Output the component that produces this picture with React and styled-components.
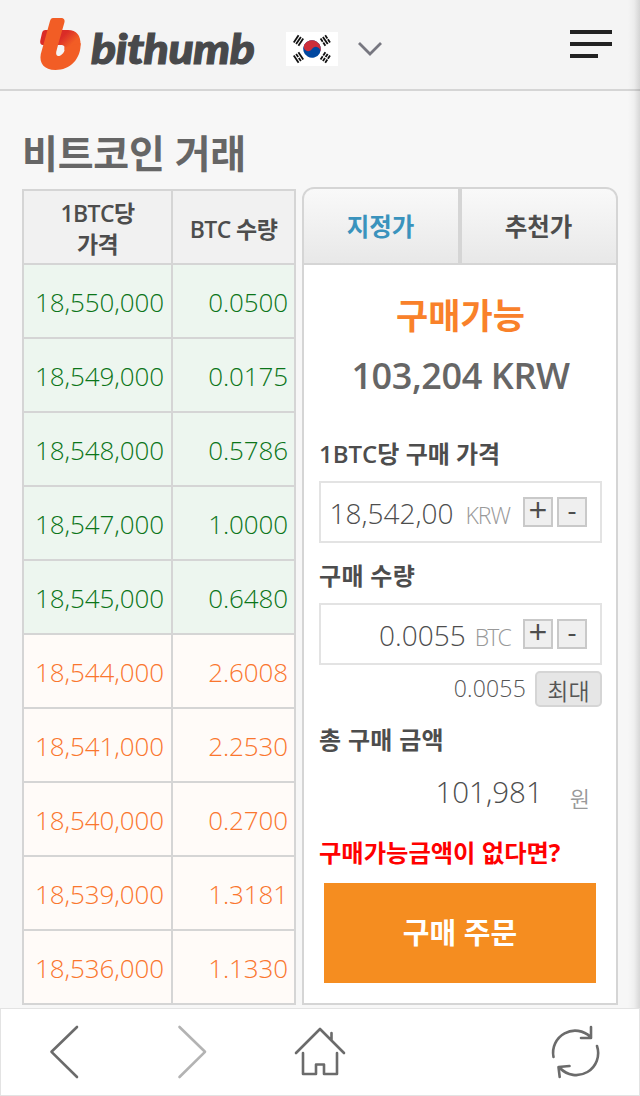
import React, { useState } from 'react'
import styled, { createGlobalStyle, css } from 'styled-components'

const GlobalStyle = createGlobalStyle`
  * {
    box-sizing: border-box;
  }
  body {
    margin: 0;
    background: #f7f7f7;
    font-family: 'Open Sans', 'Noto Sans CJK KR', sans-serif;
    color: #4d4d4d;
  }
  button {
    font-family: inherit;
    color: inherit;
    cursor: pointer;
  }
`

const Page = styled.div`
  position: relative;
  display: flex;
  flex-direction: column;
  width: 640px;
  height: 1096px;
  overflow: hidden;
  background: #f7f7f7;
`

const EdgeShade = styled.div`
  position: absolute;
  top: 0;
  right: 0;
  width: 12px;
  height: 1008px;
  background: linear-gradient(to right, rgba(0, 0, 0, 0), rgba(0, 0, 0, 0.03) 50%, rgba(0, 0, 0, 0.13));
`

const Header = styled.header`
  display: flex;
  align-items: flex-start;
  flex: 0 0 91px;
  padding: 0 28px 0 38px;
  background: #f4f4f4;
  border-bottom: 2px solid #d5d5d5;
`

const LogoMark = styled.svg`
  width: 44px;
  height: 54px;
  margin-top: 17px;
`

const Wordmark = styled.span`
  width: 168px;
  margin: 22px 0 0 9px;
  font-family: Lato, sans-serif;
  font-size: 41px;
  font-weight: 900;
  font-style: italic;
  line-height: 54px;
  letter-spacing: -0.4px;
  color: #48494b;
  transform: scaleX(1.13);
  transform-origin: left;
  -webkit-text-stroke: 1.1px #48494b;
`

const Flag = styled.svg`
  width: 52px;
  height: 34px;
  margin: 32px 0 0 27px;
`

const Caret = styled.svg`
  width: 26px;
  height: 16px;
  margin: 41px 0 0 19px;
`

const MenuButton = styled.button`
  display: flex;
  flex-direction: column;
  gap: 8px;
  margin: 30px 0 0 auto;
  padding: 0;
  border: none;
  background: none;
`

const Bar = styled.span`
  width: ${({ $short }) => ($short ? '28px' : '42px')};
  height: 4px;
  background: #222;
`

const Main = styled.main`
  flex: 0 0 917px;
  padding: 32px 22px 0;
`

const Title = styled.h1`
  height: 64px;
  margin: 0;
  font-size: 39px;
  font-weight: 700;
  line-height: 59px;
  letter-spacing: -0.2px;
  color: #666;
`

const Columns = styled.div`
  display: flex;
  align-items: flex-end;
  gap: 6px;
  height: 818px;
`

const OrderBook = styled.div`
  width: 274px;
  border: 2px solid #d5d5d5;
  border-bottom: none;
`

const BookRow = styled.div`
  display: grid;
  grid-template-columns: 147px 123px;
  height: 74px;
  border-bottom: 2px solid #d5d5d5;
  font-size: 26px;
  font-weight: 340;
  ${({ $side }) =>
    $side === 'ask'
      ? css`
          background: #edf6ef;
          color: #0b7519;
        `
      : css`
          background: #fffbf8;
          color: #fa762e;
        `}
`

const BookHead = styled(BookRow)`
  background: #f1f1f1;
  color: #4d4d4d;
  font-size: 23px;
  font-weight: 650;
  line-height: 31px;
  text-align: center;
`

const HeadCell = styled.div`
  display: flex;
  align-items: center;
  justify-content: center;
  padding-top: 4px;
  letter-spacing: -0.6px;
  & + & {
    border-left: 2px solid #d5d5d5;
  }
`

const Cell = styled.div`
  display: flex;
  align-items: center;
  justify-content: flex-end;
  padding: 1px 7px 0 0;
  letter-spacing: -0.1px;
  & + & {
    padding-right: 6px;
    border-left: 2px solid #d5d5d5;
  }
`

const Panel = styled.section`
  width: 316px;
  height: 818px;
  border: 2px solid #d5d5d5;
  border-radius: 12px 12px 0 0;
  background: #fff;
  overflow: hidden;
`

const Tabs = styled.div`
  display: grid;
  grid-template-columns: 154px 1fr;
  gap: 4px;
  height: 76px;
  border-bottom: 2px solid #d5d5d5;
  background: #d5d5d5;
`

const Tab = styled.button`
  padding: 0 1px 2px 0;
  border: none;
  background: linear-gradient(#f9f9f9, #e8e8e8);
  font-size: 24.5px;
  font-weight: 700;
  color: ${({ $active }) => ($active ? '#3a93bd' : '#4d4d4d')};
`

const Form = styled.div`
  display: flex;
  flex-direction: column;
  padding: 21px 14px 0 15px;
`

const Available = styled.div`
  height: 60px;
  font-size: 35px;
  font-weight: 700;
  line-height: 59px;
  text-align: center;
  color: #f9812a;
`

const Balance = styled.div`
  height: 60px;
  margin-bottom: 21px;
  font-size: 36px;
  font-weight: 650;
  line-height: 60px;
  letter-spacing: -0.4px;
  text-align: center;
  color: #666;
`

const Label = styled.div`
  height: ${({ $height }) => $height}px;
  padding-top: ${({ $shift }) => $shift || 0}px;
  font-size: 24px;
  font-weight: 650;
  line-height: 53px;
  letter-spacing: ${({ $spacing }) => $spacing || '0'};
`

const Field = styled.div`
  display: flex;
  align-items: center;
  height: 62px;
  padding-right: 13px;
  border: 2px solid #e3e3e3;
`

const FieldText = styled.div`
  display: flex;
  flex: 1;
  align-items: baseline;
  justify-content: flex-end;
  padding: 2px 13px 0 0;
`

const Value = styled.span`
  font-size: 28px;
  font-weight: 340;
`

const Unit = styled.span`
  margin-left: ${({ $gap }) => $gap}px;
  font-size: 23px;
  font-weight: 300;
  letter-spacing: ${({ $spacing }) => $spacing}px;
  color: #999;
`

const Step = styled.button`
  width: 30px;
  height: 30px;
  padding: 0;
  border: 2px solid #c9c9c9;
  background: #efefef;
  font-size: 30px;
  font-weight: 400;
  line-height: 19px;
  & + & {
    margin-left: 4px;
  }
`

const Sign = styled.span`
  display: block;
  height: 26px;
  font-size: ${({ $plus }) => ($plus ? '33px' : '28px')};
  line-height: ${({ $plus }) => ($plus ? '22px' : '21px')};
`

const MaxRow = styled.div`
  display: flex;
  justify-content: flex-end;
  gap: 9px;
  margin-top: 6px;
  height: 36px;
  font-size: 23px;
  font-weight: 340;
  line-height: 35px;
  letter-spacing: 0.2px;
  color: #555;
`

const MaxButton = styled.button`
  width: 67px;
  padding: 4px 0 0;
  border: 2px solid #d5d5d5;
  border-radius: 5px;
  background: #e6e6e6;
  font-size: 23px;
  font-weight: 350;
  line-height: 28px;
`

const Total = styled.div`
  display: flex;
  justify-content: flex-end;
  gap: 27px;
  height: 54px;
  padding-right: 12px;
  font-size: 29.5px;
  font-weight: 340;
  line-height: 54px;
`

const Won = styled.span`
  padding-top: 6px;
  font-size: 22px;
  color: #999;
`

const Help = styled.a`
  height: 64px;
  padding-top: 7px;
  font-size: 24.3px;
  font-weight: 700;
  line-height: 54px;
  color: #f00;
`

const Submit = styled.button`
  width: 272px;
  height: 100px;
  margin-left: 5px;
  padding-bottom: 5px;
  border: none;
  background: #f58d20;
  color: #fff;
  font-size: 29px;
  font-weight: 700;
`

const BottomNav = styled.nav`
  display: flex;
  align-items: center;
  flex: 0 0 88px;
  padding-bottom: 1px;
  border: 1px solid #e3e3e3;
  background: #fff;
`

const NavIcon = styled.svg`
  width: 56px;
  height: 60px;
  margin-left: ${({ $gap }) => $gap}px;
  fill: none;
  stroke: ${({ $muted }) => ($muted ? '#b3b3b3' : '#6b6b6b')};
  stroke-width: 2.6;
  stroke-linecap: round;
  stroke-linejoin: round;
`

const orders = [
  ['18,550,000', '0.0500', 'ask'],
  ['18,549,000', '0.0175', 'ask'],
  ['18,548,000', '0.5786', 'ask'],
  ['18,547,000', '1.0000', 'ask'],
  ['18,545,000', '0.6480', 'ask'],
  ['18,544,000', '2.6008', 'bid'],
  ['18,541,000', '2.2530', 'bid'],
  ['18,540,000', '0.2700', 'bid'],
  ['18,539,000', '1.3181', 'bid'],
  ['18,536,000', '1.1330', 'bid'],
]

/* three bars of a trigram; a broken bar is drawn as two halves */
const Trigram = ({ x, y, angle, broken }) => (
  <g transform={`translate(${x} ${y}) rotate(${angle})`} stroke="#111" strokeWidth="1.8">
    {[-2.8, 0, 2.8].map((dy, i) => (
      <path
        key={dy}
        d={broken[i] ? `M-4.3 ${dy}H-.5M.5 ${dy}H4.3` : `M-4.3 ${dy}H4.3`}
      />
    ))}
  </g>
)

const KoreanFlag = () => (
  <Flag viewBox="0 0 52 34">
    <rect width="52" height="34" fill="#fff" />
    <g transform="rotate(30 26 17)">
      <circle cx="26" cy="17" r="8.8" fill="#0047a0" />
      <path
        d="M17.2 17a8.8 8.8 0 0 1 17.6 0a4.4 4.4 0 0 0-8.8 0a4.4 4.4 0 0 1-8.8 0"
        fill="#cd2e3a"
      />
    </g>
    <Trigram x={12.5} y={8.5} angle={-56} broken={[0, 0, 0]} />
    <Trigram x={39.3} y={8.5} angle={56} broken={[1, 0, 1]} />
    <Trigram x={12.5} y={25.5} angle={56} broken={[0, 1, 0]} />
    <Trigram x={39.3} y={25.5} angle={-56} broken={[1, 1, 1]} />
  </Flag>
)

const Logo = () => (
  <LogoMark viewBox="0 0 44 54">
    <defs>
      <linearGradient id="fold" gradientUnits="userSpaceOnUse" x1="24" y1="18" x2="34" y2="28">
        <stop offset="0.1" stopColor="#da2c27" />
        <stop offset="0.95" stopColor="#f25d25" />
      </linearGradient>
    </defs>
    <path
      d="M7.500 13H30C38.500 13 43 18.500 42.500 28L38 36L26.500 33V30C26 28 24 27.700 20.500 28H4.500C2.500 27.700 1.800 25.500 2.300 23.500L4 16C4.500 14 5.500 13 7.500 13Z"
      fill="url(#fold)"
    />
    <path
      d="M15 1H23C25.700 1 27.200 3 26.400 5.500L20 28L18.200 35C17.700 38.500 19.500 39.800 22 38.700C25.500 37 27.300 33.500 26.500 30.500L42.600 26C43.200 42 32 53 17.500 53C6 53 1 46 2.800 37L12 4C12.600 2 13.500 1 15 1Z"
      fill="#f25d25"
    />
  </LogoMark>
)

const Steppers = () => (
  <>
    <Step>
      <Sign $plus>+</Sign>
    </Step>
    <Step>
      <Sign>-</Sign>
    </Step>
  </>
)

const App = () => {
  const [tab, setTab] = useState(0)

  return (
    <>
      <GlobalStyle />
      <Page>
        <Header>
          <Logo />
          <Wordmark>bithumb</Wordmark>
          <KoreanFlag />
          <Caret viewBox="0 0 26 16" fill="none" stroke="#777780" strokeWidth="2.8">
            <path d="M2 2L13 13L24 2" />
          </Caret>
          <MenuButton aria-label="menu">
            <Bar />
            <Bar />
            <Bar $short />
          </MenuButton>
        </Header>

        <Main>
          <Title>비트코인 거래</Title>
          <Columns>
            <OrderBook>
              <BookHead>
                <HeadCell>
                  1BTC당
                  <br />
                  가격
                </HeadCell>
                <HeadCell>BTC 수량</HeadCell>
              </BookHead>
              {orders.map(([price, amount, side]) => (
                <BookRow key={price} $side={side}>
                  <Cell>{price}</Cell>
                  <Cell>{amount}</Cell>
                </BookRow>
              ))}
            </OrderBook>

            <Panel>
              <Tabs>
                {['지정가', '추천가'].map((name, i) => (
                  <Tab key={name} $active={tab === i} onClick={() => setTab(i)}>
                    {name}
                  </Tab>
                ))}
              </Tabs>
              <Form>
                <Available>구매가능</Available>
                <Balance>103,204 KRW</Balance>

                <Label $height={54}>1BTC당 구매 가격</Label>
                <Field>
                  <FieldText>
                    <Value>18,542,00</Value>
                    <Unit $gap={12} $spacing={-1}>KRW</Unit>
                  </FieldText>
                  <Steppers />
                </Field>

                <Label $height={60} $shift={6} $spacing="0.3px">구매 수량</Label>
                <Field>
                  <FieldText>
                    <Value>0.0055</Value>
                    <Unit $gap={9} $spacing={-1.8}>BTC</Unit>
                  </FieldText>
                  <Steppers />
                </Field>
                <MaxRow>
                  0.0055
                  <MaxButton>최대</MaxButton>
                </MaxRow>

                <Label $height={58} $shift={6} $spacing="0.3px">총 구매 금액</Label>
                <Total>
                  101,981
                  <Won>원</Won>
                </Total>
                <Help>구매가능금액이 없다면?</Help>
                <Submit>구매 주문</Submit>
              </Form>
            </Panel>
          </Columns>
        </Main>

        <BottomNav>
          <NavIcon viewBox="0 0 56 60" $gap={35}>
            <path d="M41 5L15.500 29.800L41 55" />
          </NavIcon>
          <NavIcon viewBox="0 0 56 60" $gap={72} $muted>
            <path d="M15.500 5L41 29.800L15.500 55" />
          </NavIcon>
          <NavIcon viewBox="0 0 56 60" $gap={72}>
            <path d="M4 31L28 7L52 31M39.500 11V18M11 31V52H24V42.500H32V52H45V31" />
          </NavIcon>
          <NavIcon viewBox="0 0 56 60" $gap={199}>
            <path d="M6.500 35A22 22 0 0 1 43.500 15M44 5V16H34M50 24A22 22 0 0 1 13 46M22.500 44L11.500 45L12.700 55" />
          </NavIcon>
        </BottomNav>
        <EdgeShade />
      </Page>
    </>
  )
}

export default App
